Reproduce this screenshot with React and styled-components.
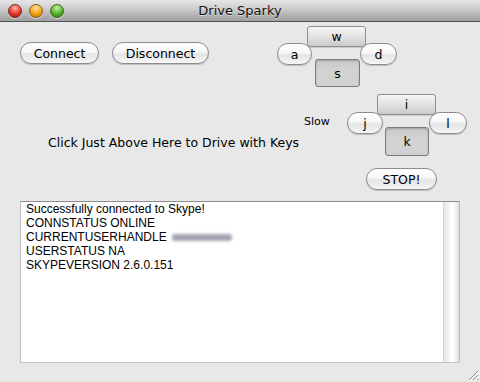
import React from 'react';
import styled, { createGlobalStyle } from 'styled-components';

const Global = createGlobalStyle`
  html, body { margin: 0; padding: 0; }
  body { width: 480px; height: 382px; overflow: hidden; background: #e8e8e8; }
`;

const Window = styled.div`
  position: relative;
  width: 480px;
  height: 382px;
  overflow: hidden;
  background: #e8e8e8;
  display: flex;
  flex-direction: column;
  font-family: "DejaVu Sans", "Liberation Sans", sans-serif;
  color: #000;
`;

const TitleBar = styled.div`
  height: 21px;
  border-bottom: 1px solid #555;
  background: linear-gradient(#e6e6e6, #cbcbcb 45%, #adadad 80%, #a0a0a0);
  display: grid;
  grid-template-columns: 1fr auto 1fr;
  align-items: center;
`;

const Lights = styled.div`
  display: flex;
  gap: 7px;
  padding-left: 8px;
`;

const lightColors = {
  red: ['#ffb8ae', '#e53624', '#9c1006', '#7a2a22'],
  yellow: ['#ffe39a', '#f3a012', '#b86604', '#8a6020'],
  green: ['#cff2a4', '#54b024', '#2a760c', '#3e6a22'],
};

const Light = styled.span`
  width: 14px;
  height: 14px;
  border-radius: 50%;
  border: 1px solid ${p => lightColors[p.$c][3]};
  box-sizing: border-box;
  background: radial-gradient(circle at 50% 25%, ${p => lightColors[p.$c][0]} 0%, ${p => lightColors[p.$c][1]} 55%, ${p => lightColors[p.$c][2]} 100%);
  box-shadow: 0 1px 0 rgba(255,255,255,0.5);
`;

const Title = styled.div`
  font-size: 13px;
  color: #111;
  text-shadow: 0 1px 0 rgba(255,255,255,0.5);
`;

const Content = styled.div`
  display: flex;
  flex-direction: column;
  padding: 0 20px;
`;

const TopRow = styled.div`
  display: flex;
  align-items: flex-start;
  height: 65px;
`;

const ButtonGroup = styled.div`
  display: flex;
  gap: 13px;
  margin-top: 20px;
`;

const PillButton = styled.button`
  width: ${p => p.$w}px;
  height: 22px;
  box-sizing: border-box;
  border: 1px solid #8c8c8c;
  border-radius: 11px;
  background: linear-gradient(#ffffff, #f6f6f6 45%, #e4e4e4 55%, #f2f2f2 90%, #fafafa);
  box-shadow: 0 1px 1px rgba(0,0,0,0.18), inset 0 1px 0 #fff;
  font-family: "DejaVu Sans", sans-serif;
  font-size: 12.5px;
  color: #000;
  padding: 0;
  line-height: 19px;
  position: relative;
  z-index: ${p => p.$z || 1};
  grid-area: ${p => p.$area || 'auto'};
`;

const KeyPad = styled.div`
  display: grid;
  grid-template-columns: ${p => p.$cols};
  grid-template-rows: ${p => p.$rows};
  margin-left: ${p => p.$ml || 0}px;
  margin-top: ${p => p.$mt || 0}px;
`;

const SquareKey = styled.button`
  grid-area: ${p => p.$area};
  box-sizing: border-box;
  border: 1px solid ${p => (p.$pressed ? '#7c7c7c' : '#8e8e8e')};
  border-radius: 3px;
  background: ${p =>
    p.$pressed
      ? 'linear-gradient(#c8c8c8, #d3d3d3 40%, #d1d1d1)'
      : 'linear-gradient(#f6f6f6, #e2e2e2 50%, #cbcbcb 100%)'};
  box-shadow: ${p => (p.$pressed ? 'inset 0 1px 2px rgba(0,0,0,0.2)' : '0 1px 0 rgba(0,0,0,0.12)')};
  font-family: "DejaVu Sans", sans-serif;
  font-size: 12.5px;
  color: #000;
  padding: 0;
  position: relative;
  z-index: 2;
`;

const SecondRow = styled.div`
  display: grid;
  grid-template-columns: 284px 43px auto;
  align-items: start;
  margin-top: 7px;
`;

const Hint = styled.div`
  font-size: 12.5px;
  padding-left: 28px;
  margin-top: 41px;
  line-height: 16px;
  white-space: nowrap;
`;

const SmallLabel = styled.div`
  font-size: 11px;
  line-height: 14px;
  margin-top: 21px;
`;

const StopRow = styled.div`
  display: flex;
  padding-left: 346px;
  margin-top: 12px;
`;

const LogBox = styled.div`
  display: flex;
  margin-top: 11px;
  height: 162px;
  box-sizing: border-box;
  background: #fff;
  border: 1px solid #bdbdbd;
  border-top-color: #8e8e8e;
  border-bottom-color: #c4c4c4;
`;

const LogText = styled.div`
  flex: 1;
  padding: 0 5px;
  font-family: "Liberation Sans", Arial, sans-serif;
  font-size: 12px;
  line-height: 14px;
  color: #000;
`;

const Line = styled.div`
  display: flex;
  align-items: center;
  white-space: nowrap;
`;

const Blur = styled.span`
  display: inline-block;
  width: 60px;
  height: 7px;
  margin-left: 5px;
  margin-top: 1px;
  border-radius: 3px;
  background: #a4a4b2;
  filter: blur(1.6px);
`;

const Scrollbar = styled.div`
  width: 15px;
  border-left: 1px solid #d4d4d4;
  background: linear-gradient(to right, #e6e6e6, #f6f6f6 35%, #ffffff 55%, #f0f0f0 80%, #dedede);
`;

const Grip = styled.svg`
  position: absolute;
  right: 1px;
  bottom: 1px;
`;

export default function App() {
  return (
    <>
      <Global />
      <Window>
        <TitleBar>
          <Lights>
            <Light $c="red" />
            <Light $c="yellow" />
            <Light $c="green" />
          </Lights>
          <Title>Drive Sparky</Title>
          <div />
        </TitleBar>
        <Content>
          <TopRow>
            <ButtonGroup>
              <PillButton $w={79}>Connect</PillButton>
              <PillButton $w={97}>Disconnect</PillButton>
            </ButtonGroup>
            <KeyPad
              $ml={68}
              $mt={4}
              $cols="30px 5px 3px 45px 6px 31px"
              $rows="17px 4px 12px 4px 24px"
            >
              <SquareKey $area="1 / 2 / 3 / 6">w</SquareKey>
              <PillButton $area="2 / 1 / 5 / 3" $z={3}>a</PillButton>
              <PillButton $area="2 / 5 / 5 / 7" $z={3}>d</PillButton>
              <SquareKey $area="4 / 4 / 6 / 5" $pressed>s</SquareKey>
            </KeyPad>
          </TopRow>
          <SecondRow>
            <Hint>Click Just Above Here to Drive with Keys</Hint>
            <SmallLabel>Slow</SmallLabel>
            <KeyPad
              $cols="30px 6px 2px 44px 1px 6px 31px"
              $rows="18px 3px 12px 5px 24px"
            >
              <SquareKey $area="1 / 2 / 3 / 7">i</SquareKey>
              <PillButton $area="2 / 1 / 5 / 3" $z={3}>j</PillButton>
              <PillButton $area="2 / 5 / 5 / 8" $z={3}>l</PillButton>
              <SquareKey $area="4 / 4 / 6 / 5" $pressed>k</SquareKey>
            </KeyPad>
          </SecondRow>
          <StopRow>
            <PillButton $w={71}>STOP!</PillButton>
          </StopRow>
          <LogBox>
            <LogText>
              <Line>Successfully connected to Skype!</Line>
              <Line>CONNSTATUS ONLINE</Line>
              <Line>
                CURRENTUSERHANDLE<Blur />
              </Line>
              <Line>USERSTATUS NA</Line>
              <Line>SKYPEVERSION 2.6.0.151</Line>
            </LogText>
            <Scrollbar />
          </LogBox>
        </Content>
        <Grip width="12" height="12" viewBox="0 0 12 12">
          <g stroke="#8a8a8a" strokeWidth="1">
            <line x1="11" y1="2" x2="2" y2="11" />
            <line x1="11" y1="6" x2="6" y2="11" />
            <line x1="11" y1="10" x2="10" y2="11" />
          </g>
          <g stroke="#ffffff" strokeWidth="1">
            <line x1="12" y1="3" x2="3" y2="12" />
            <line x1="12" y1="7" x2="7" y2="12" />
          </g>
        </Grip>
      </Window>
    </>
  );
}
